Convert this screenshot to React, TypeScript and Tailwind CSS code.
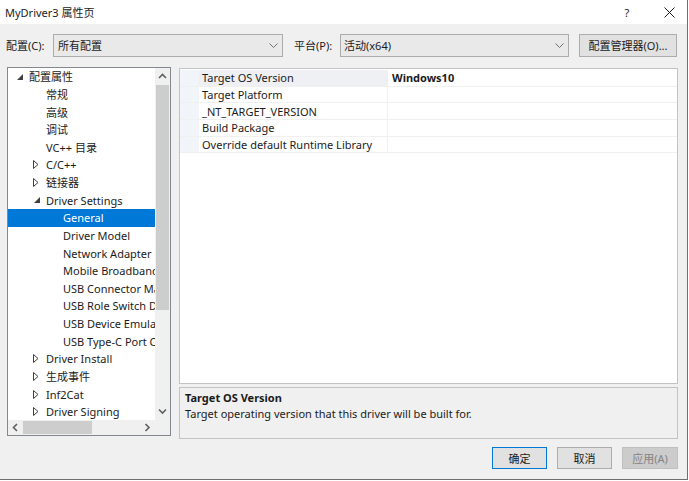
import React from "react";

type TreeItem = {
  label: string;
  level: 0 | 1 | 2;
  state?: "open" | "closed";
  selected?: boolean;
};

const tree: TreeItem[] = [
  { label: "配置属性", level: 0, state: "open" },
  { label: "常规", level: 1 },
  { label: "高级", level: 1 },
  { label: "调试", level: 1 },
  { label: "VC++ 目录", level: 1 },
  { label: "C/C++", level: 1, state: "closed" },
  { label: "链接器", level: 1, state: "closed" },
  { label: "Driver Settings", level: 1, state: "open" },
  { label: "General", level: 2, selected: true },
  { label: "Driver Model", level: 2 },
  { label: "Network Adapter", level: 2 },
  { label: "Mobile Broadband", level: 2 },
  { label: "USB Connector Manager", level: 2 },
  { label: "USB Role Switch Driver", level: 2 },
  { label: "USB Device Emulation", level: 2 },
  { label: "USB Type-C Port Controller", level: 2 },
  { label: "Driver Install", level: 1, state: "closed" },
  { label: "生成事件", level: 1, state: "closed" },
  { label: "Inf2Cat", level: 1, state: "closed" },
  { label: "Driver Signing", level: 1, state: "closed" },
];

const indent = ["pl-[8px]", "pl-[25px]", "pl-[42px]"];

const props = [
  { name: "Target OS Version", value: "Windows10" },
  { name: "Target Platform", value: "" },
  { name: "_NT_TARGET_VERSION", value: "" },
  { name: "Build Package", value: "" },
  { name: "Override default Runtime Library", value: "" },
];

function Expander({ state }: { state?: "open" | "closed" }) {
  if (state === "open")
    return (
      <svg width="6" height="6" viewBox="0 0 6 6" className="ml-[1px]">
        <polygon points="6,0 6,6 0,6" fill="#404040" />
      </svg>
    );
  if (state === "closed")
    return (
      <svg width="6" height="9" viewBox="0 0 6 9">
        <polygon points="0.5,0.5 5,4.5 0.5,8.5" fill="none" stroke="#404040" strokeWidth="1" />
      </svg>
    );
  return null;
}

function Chevron({ dir }: { dir: "up" | "down" | "left" | "right" }) {
  const pts = {
    up: "1,6 4.5,2.5 8,6",
    down: "1,2.5 4.5,6 8,2.5",
    left: "6,1 2.5,4.5 6,8",
    right: "2.5,1 6,4.5 2.5,8",
  }[dir];
  return (
    <svg width="9" height="9" viewBox="0 0 9 9">
      <polyline points={pts} fill="none" stroke="#606060" strokeWidth="1.6" />
    </svg>
  );
}

function ComboArrow() {
  return (
    <svg width="9" height="6" viewBox="0 0 9 6">
      <polyline points="0.5,0.5 4.5,4.5 8.5,0.5" fill="none" stroke="#707070" strokeWidth="1" />
    </svg>
  );
}

export default function App() {
  return (
    <div className="w-[689px] h-[481px] bg-white font-['Noto_Sans','Noto_Sans_CJK_SC',sans-serif] text-[11px] text-[#1b1b1b] leading-none">
      <div className="w-[688px] h-[480px] flex flex-col border-r border-b border-[#6f6f6f]">
        {/* title bar */}
        <div className="h-[24px] bg-white flex items-center pl-[5px]">
          <span className="flex-1">MyDriver3 属性页</span>
          <span className="w-[12px] text-center mr-[31px]">?</span>
          <svg width="11" height="11" viewBox="0 0 11 11" className="mr-[12px]">
            <path d="M0.5 0.5 L10.5 10.5 M10.5 0.5 L0.5 10.5" stroke="#1b1b1b" strokeWidth="1" />
          </svg>
        </div>

        <div className="flex-1 bg-[#f0f0f0] pl-[7px] pr-[9px] flex flex-col">
          {/* config row */}
          <div className="mt-[10px] h-[23px] flex items-center">
            <span className="w-[47px] -ml-[1px] pr-[1px]">配置(C):</span>
            <div className="w-[230px] h-[23px] border border-[#acacac] bg-[#e9e9e9] flex items-center pl-[4px] pr-[4px]">
              <span className="flex-1">所有配置</span>
              <ComboArrow />
            </div>
            <span className="ml-[11px] w-[46px]">平台(P):</span>
            <div className="w-[229px] h-[23px] border border-[#acacac] bg-[#e9e9e9] flex items-center pl-[3px] pr-[4px]">
              <span className="flex-1">活动(x64)</span>
              <ComboArrow />
            </div>
            <button className="ml-[10px] w-[98px] h-[23px] border border-[#adadad] bg-[#e1e1e1] text-[11px]">
              配置管理器(O)...
            </button>
          </div>

          {/* main area */}
          <div className="mt-[10px] flex gap-[8px]">
            {/* tree */}
            <div className="w-[164px] h-[369px] border border-[#828790] bg-white flex flex-col">
              <div className="flex-1 flex min-h-0">
                <div className="flex-1 overflow-hidden">
                  {tree.map((t) => (
                    <div
                      key={t.label}
                      className={`h-[17.63px] flex items-center whitespace-nowrap ${indent[t.level]} ${
                        t.selected ? "bg-[#0078d7] text-white" : ""
                      }`}
                    >
                      <span className="w-[13px] shrink-0 flex items-center">
                        <Expander state={t.state} />
                      </span>
                      <span>{t.label}</span>
                    </div>
                  ))}
                </div>
                <div className="w-[15px] bg-[#f0f0f0] flex flex-col">
                  <div className="h-[17px] flex items-center justify-center">
                    <Chevron dir="up" />
                  </div>
                  <div className="h-[225px] mx-[1px] bg-[#cdcdcd]" />
                  <div className="flex-1" />
                  <div className="h-[17px] flex items-center justify-center">
                    <Chevron dir="down" />
                  </div>
                </div>
              </div>
              <div className="h-[15px] flex bg-[#f0f0f0]">
                <div className="w-[15px] flex items-center justify-center">
                  <Chevron dir="left" />
                </div>
                <div className="w-[69px] my-[1px] bg-[#cdcdcd]" />
                <div className="flex-1" />
                <div className="w-[16px] flex items-center justify-center">
                  <Chevron dir="right" />
                </div>
                <div className="w-[15px] bg-[#f0f0f0]" />
              </div>
            </div>

            {/* right column */}
            <div className="flex-1 mt-[1px] flex flex-col">
              <div className="h-[316px] border border-[#c3c3c3] bg-white pt-[1px]">
                {props.map((p, i) => (
                  <div key={p.name} className="h-[16.67px] flex border-b border-[#f0f0f0]">
                    <div className="w-[19px] bg-[#f1f4f9]" />
                    <div
                      className={`w-[189px] flex items-center pl-[3px] whitespace-nowrap overflow-hidden border-r border-[#f0f0f0] ${
                        i === 0 ? "bg-[#eef0f4]" : ""
                      }`}
                    >
                      {p.name}
                    </div>
                    <div className="flex-1 flex items-center pl-[4px] font-bold">{p.value}</div>
                  </div>
                ))}
              </div>
              <div className="mt-[3px] h-[52px] border border-[#c3c3c3] bg-[#f0f0f0] pl-[5px] pt-[2px]">
                <div className="font-bold h-[15px] flex items-center">Target OS Version</div>
                <div className="h-[15px] mt-[1px] flex items-center">
                  Target operating version that this driver will be built for.
                </div>
              </div>
            </div>
          </div>

          {/* buttons */}
          <div className="mt-[8px] flex justify-end gap-[10px]">
            <button className="w-[55px] h-[22px] border border-[#0078d7] bg-[#e1e1e1] text-[11px]">确定</button>
            <button className="w-[55px] h-[22px] border border-[#adadad] bg-[#e1e1e1] text-[11px]">取消</button>
            <button className="w-[56px] h-[22px] border border-[#bfbfbf] bg-[#cccccc] text-[11px] text-[#838383]">
              应用(A)
            </button>
          </div>
        </div>
      </div>
    </div>
  );
}
